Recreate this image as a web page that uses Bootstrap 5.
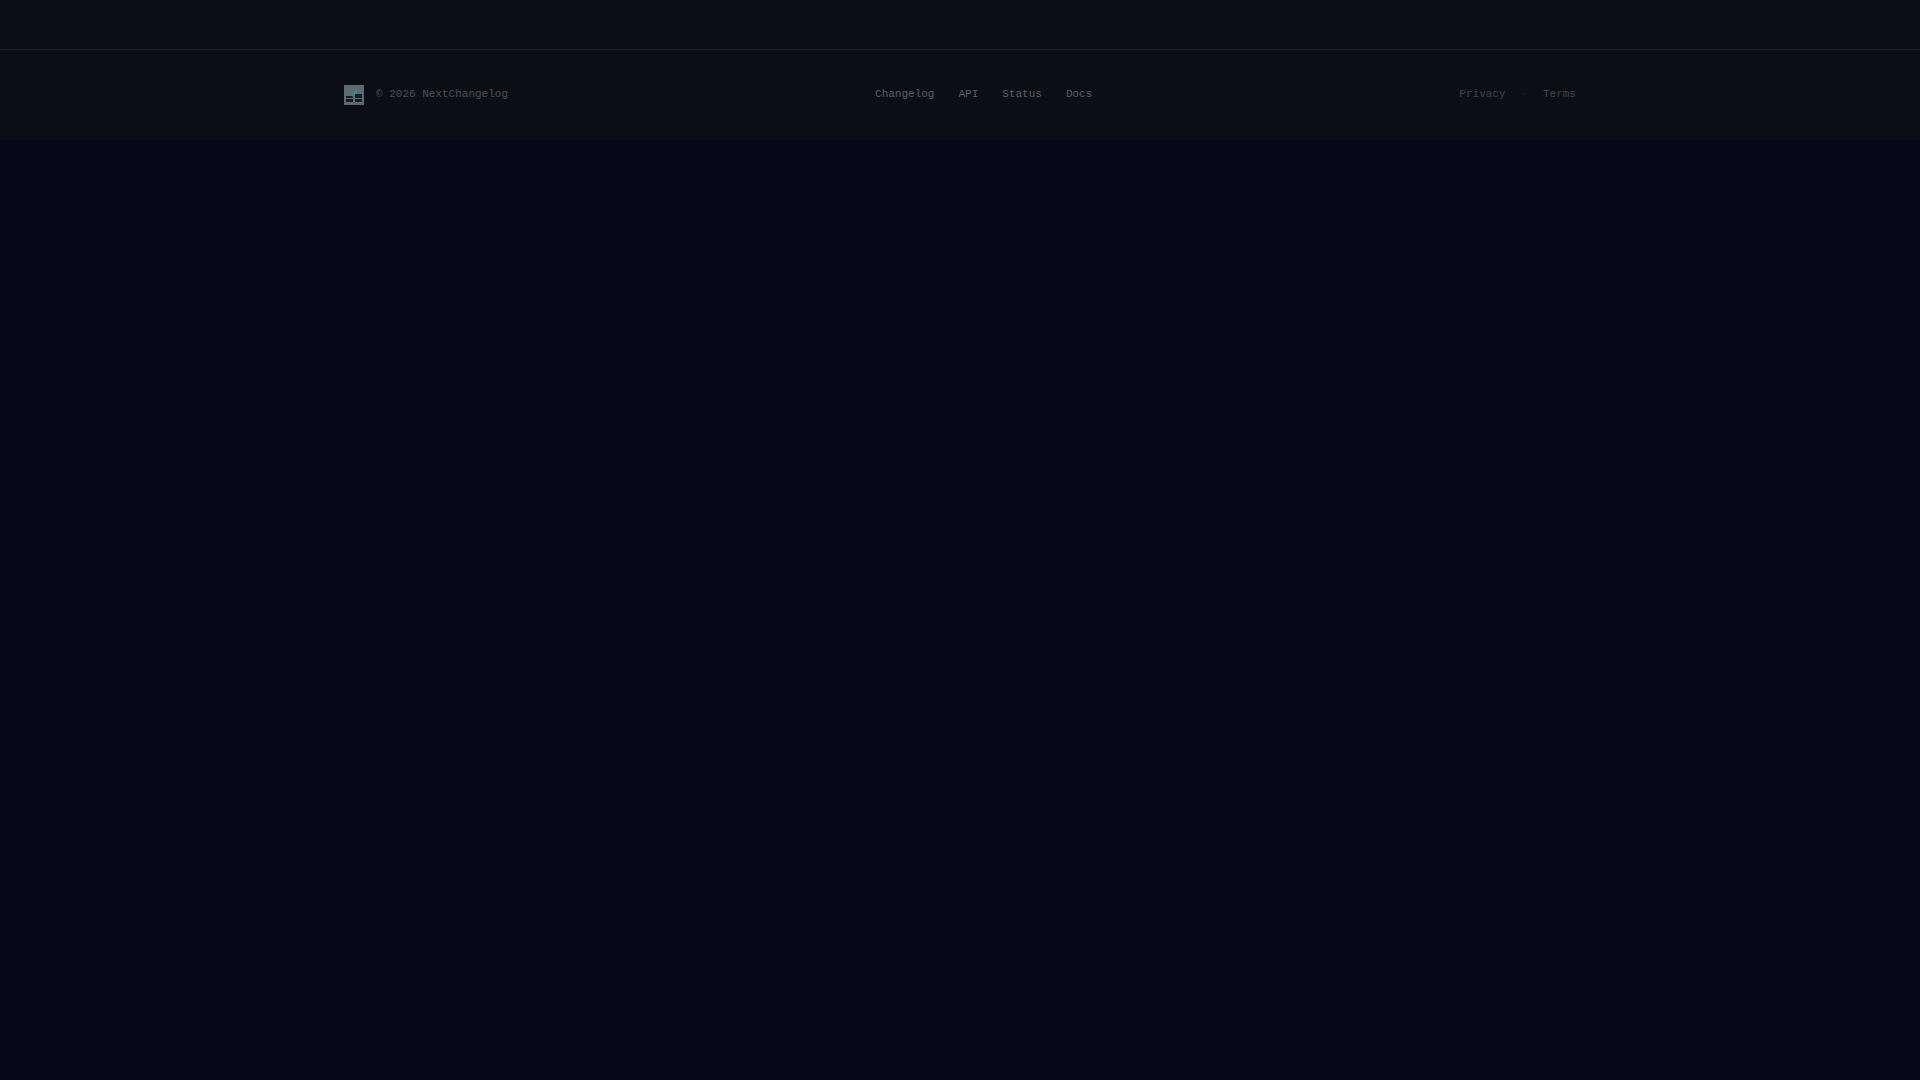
<!DOCTYPE html>
<html lang="en">
<head>
    <meta charset="UTF-8">
    <title>NextChangelog</title>
    <link href="https://cdn.jsdelivr.net/npm/bootstrap@5.3.3/dist/css/bootstrap.min.css" rel="stylesheet">
    <style>
        body {
            background: #080818;
            font-family: "Liberation Mono", monospace;
            font-size: 11px;
        }
        .top-strip {
            height: 50px;
            background: #0b0e15;
            border-bottom: 1px solid #181c23;
        }
        .foot-area {
            height: 90px;
            background: #0b0e15;
        }
        .foot-inner {
            max-width: 1280px;
            height: 100%;
            padding: 0 24px;
        }
        .foot-logo {
            width: 20px;
            height: 20px;
            display: block;
        }
        .foot-text { padding-bottom: 2px; }
        .copy-text { color: #4b5059; }
        .foot-link { color: #5b6069; text-decoration: none; }
        .legal-link { color: #40454d; text-decoration: none; }
        .legal-dot { color: #2c3037; font-size: 9px; line-height: 16.5px; }
    </style>
</head>
<body>
<div class="top-strip"></div>
<footer class="foot-area">
    <div class="foot-inner mx-auto d-flex align-items-center justify-content-between">
        <div class="d-flex align-items-center gap-2">
            <svg class="foot-logo me-1" viewBox="0 0 20 20">
                <rect width="20" height="20" fill="#5f6a70"/>
                <rect x="2" y="11" width="7" height="2" fill="#161c22"/>
                <rect x="2" y="14" width="7" height="3" fill="#161c22"/>
                <rect x="11" y="9" width="7" height="4" fill="#161c22"/>
                <rect x="11" y="14" width="7" height="3" fill="#161c22"/>
                <path d="M8 11 L13 5" stroke="#2f8f8a" stroke-width="2.5"/>
            </svg>
            <span class="copy-text foot-text">© 2026 NextChangelog</span>
        </div>
        <nav class="d-flex gap-4 foot-text">
            <a class="foot-link" href="#">Changelog</a>
            <a class="foot-link" href="#">API</a>
            <a class="foot-link" href="#">Status</a>
            <a class="foot-link" href="#">Docs</a>
        </nav>
        <div class="d-flex gap-3 foot-text">
            <a class="legal-link" href="#">Privacy</a>
            <span class="legal-dot">·</span>
            <a class="legal-link" href="#">Terms</a>
        </div>
    </div>
</footer>
<script src="https://cdn.jsdelivr.net/npm/bootstrap@5.3.3/dist/js/bootstrap.bundle.min.js"></script>
</body>
</html>
